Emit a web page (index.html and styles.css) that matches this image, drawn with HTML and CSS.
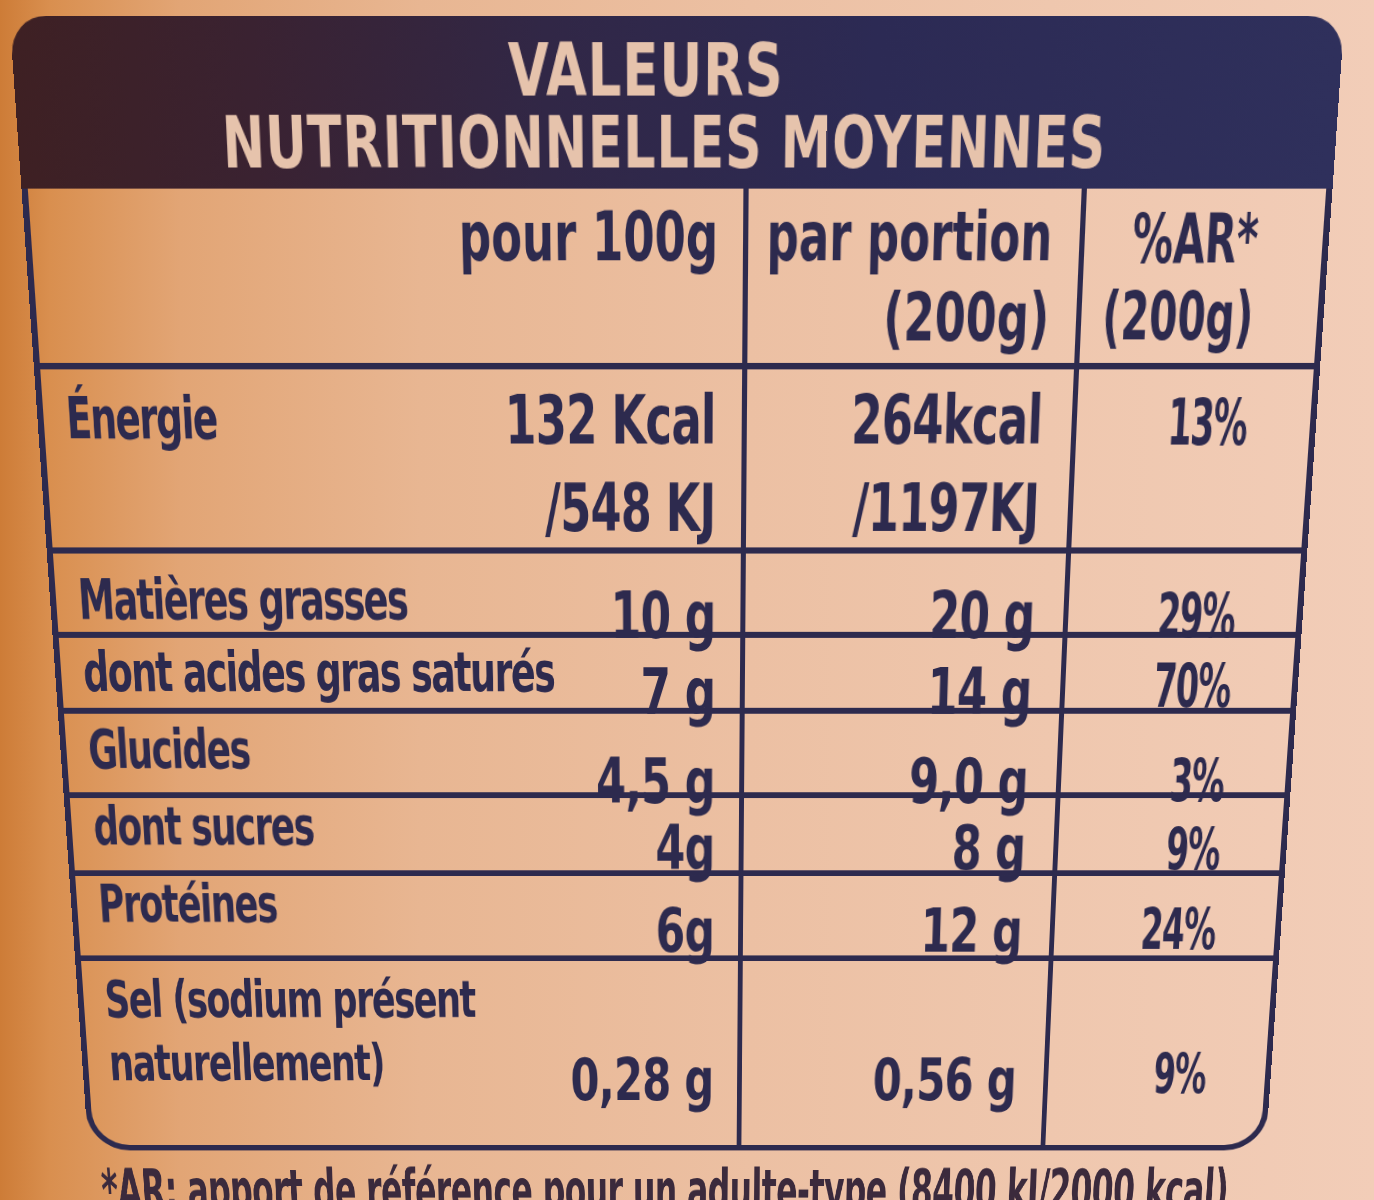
FILE: index.html
```html
<!DOCTYPE html>
<html lang="fr">
<head>
<meta charset="utf-8">
<title>Valeurs nutritionnelles moyennes</title>
<link rel="stylesheet" href="styles.css">
</head>
<body>
<div class="label">
  <div class="title">
    <div class="t1">VALEURS</div>
    <div class="t2">NUTRITIONNELLES MOYENNES</div>
  </div>
  <div class="table">
    <div class="row head">
      <div class="c1 end"><div class="h">pour 100g</div></div>
      <div class="c2"><div class="h"><div>par portion</div><div class="l2">(200g)</div></div></div>
      <div class="c3"><div class="h"><div>%AR*</div><div class="l2">(200g)</div></div></div>
    </div>
    <div class="row r-energy">
      <div class="c1"><div class="lab">Énergie</div><div class="v"><div>132 Kcal</div><div class="l2">/548 KJ</div></div></div>
      <div class="c2"><div class="v"><div>264kcal</div><div class="l2">/1197KJ</div></div></div>
      <div class="c3"><div class="p">13%</div></div>
    </div>
    <div class="row r-fat">
      <div class="c1"><div class="lab">Matières grasses</div><div class="v">10 g</div></div>
      <div class="c2"><div class="v">20 g</div></div>
      <div class="c3"><div class="p">29%</div></div>
    </div>
    <div class="row r-sat">
      <div class="c1"><div class="lab">dont acides gras saturés</div><div class="v">7 g</div></div>
      <div class="c2"><div class="v">14 g</div></div>
      <div class="c3"><div class="p">70%</div></div>
    </div>
    <div class="row r-carb">
      <div class="c1"><div class="lab">Glucides</div><div class="v">4,5 g</div></div>
      <div class="c2"><div class="v">9,0 g</div></div>
      <div class="c3"><div class="p">3%</div></div>
    </div>
    <div class="row r-sugar">
      <div class="c1"><div class="lab">dont sucres</div><div class="v">4g</div></div>
      <div class="c2"><div class="v">8 g</div></div>
      <div class="c3"><div class="p">9%</div></div>
    </div>
    <div class="row r-prot">
      <div class="c1"><div class="lab">Protéines</div><div class="v">6g</div></div>
      <div class="c2"><div class="v">12 g</div></div>
      <div class="c3"><div class="p">24%</div></div>
    </div>
    <div class="row r-salt">
      <div class="c1"><div class="lab"><div>Sel (sodium présent</div><div>naturellement)</div></div><div class="v">0,28 g</div></div>
      <div class="c2"><div class="v">0,56 g</div></div>
      <div class="c3"><div class="p">9%</div></div>
    </div>
  </div>
  <div class="note">*AR: apport de référence pour un adulte-type (8400 kJ/2000 kcal)</div>
</div>
</body>
</html>
```

FILE: styles.css
```css
:root {
  --ink: #2d2a4e;
}

html, body {
  margin: 0;
}

body {
  width: 1374px;
  height: 1200px;
  box-sizing: border-box;
  padding: 59.7px 0 0 55px;
  overflow: hidden;
  background: linear-gradient(90deg, #cd7c37 0px, #d98f4f 50px, #e2a575 180px, #e8b692 420px, #ecc0a3 750px, #efc7ae 1050px, #f2cdb8 1374px);
  font-family: "Liberation Sans Narrow", "DejaVu Sans Condensed", "Liberation Sans", sans-serif;
  font-weight: 700;
  color: var(--ink);
}

.label {
  width: 1244px;
  transform-origin: 622px 610.3px;
  transform: perspective(312px) rotateX(-2deg);
}

.title {
  height: 153px;
  box-sizing: border-box;
  padding: 16px 24px 0 0;
  text-align: center;
  font-size: 64px;
  line-height: 64px;
  letter-spacing: 1px;
  color: #e6c3ac;
  background: linear-gradient(90deg, #3e2023 0%, #3a2231 18%, #312746 40%, #2c2a54 65%, #2f305c 100%);
  border-radius: 34px 34px 0 0;
  white-space: nowrap;
}

.t1 {
  padding-right: 40px;
  transform: scaleX(0.86);
}

.t2 {
  transform: scaleX(0.83);
}

.table {
  border: 6px solid var(--ink);
  border-top: 0;
  border-radius: 0 0 44px 44px;
}

.row {
  display: grid;
  grid-template-columns: 679px 321px 232px;
  border-top: 6px solid var(--ink);
  box-sizing: border-box;
  --lab: 0px;
  --val: 0px;
  --pct: 0px;
}

.row.head {
  border-top: 0;
  height: 160px;
}

.r-energy { height: 176.4px; --lab: 17.3px; --val: 15.5px; --pct: 19.7px; }
.r-fat    { height: 82.5px;  --lab: 15.7px; --val: 28.5px; --pct: 31px; }
.r-sat    { height: 76px;    --lab: 5.2px;  --val: 22.3px; --pct: 17.8px; }
.r-carb   { height: 86.5px;  --lab: 7.6px;  --val: 37.2px; --pct: 37.7px; }
.r-sugar  { height: 80.9px;  --lab: 0px;    --val: 20px;   --pct: 23px; }
.r-prot   { height: 89.8px;  --lab: 0px;    --val: 25.4px; --pct: 26px; }
.r-salt   { height: 207.3px; --lab: 5.5px;  --val: 96.5px; --pct: 91.7px; }

.c1 {
  display: grid;
  grid-template-columns: minmax(0, 1fr) auto;
  align-items: start;
  padding: 0 25px 0 22px;
}

.c1.end {
  display: flex;
  justify-content: flex-end;
  padding-right: 24px;
}

.c2,
.c3 {
  display: flex;
  flex-direction: column;
  align-items: flex-end;
  border-left: 5px solid var(--ink);
  text-align: right;
}

.c2 {
  padding-right: 29px;
}

.c3 {
  padding-right: 62px;
}

.lab {
  min-width: 0;
  font-size: 56px;
  line-height: 58px;
  letter-spacing: -2px;
  padding-top: var(--lab);
  white-space: nowrap;
  transform: scaleX(0.72);
  transform-origin: left center;
}

.r-salt .lab {
  line-height: 69px;
}

.v {
  font-size: 64px;
  line-height: 64px;
  letter-spacing: -1px;
  padding-top: var(--val);
  white-space: nowrap;
  text-align: right;
  transform: scaleX(0.76);
  transform-origin: right center;
}

.v .l2 {
  margin-top: 20.5px;
}

.p {
  font-size: 60px;
  line-height: 60px;
  letter-spacing: -2px;
  padding-top: var(--pct);
  white-space: nowrap;
  transform: scaleX(0.62);
  transform-origin: right center;
}

.h {
  font-size: 62px;
  line-height: 62px;
  padding-top: 13px;
  white-space: nowrap;
  text-align: right;
  transform: scaleX(0.77);
  transform-origin: right center;
}

.head .c2 {
  padding-right: 26px;
}

.h .l2 {
  margin-top: 12px;
}

.head .c3 .h {
  padding-top: 15px;
  transform: scaleX(0.7);
}

.head .c3 .h .l2 {
  margin-top: 9px;
}

.note {
  font-size: 64px;
  line-height: 64px;
  letter-spacing: -1px;
  padding: 13px 0 0 19px;
  color: #3b2a3c;
  white-space: nowrap;
  transform: scaleX(0.58);
  transform-origin: left center;
}
```
